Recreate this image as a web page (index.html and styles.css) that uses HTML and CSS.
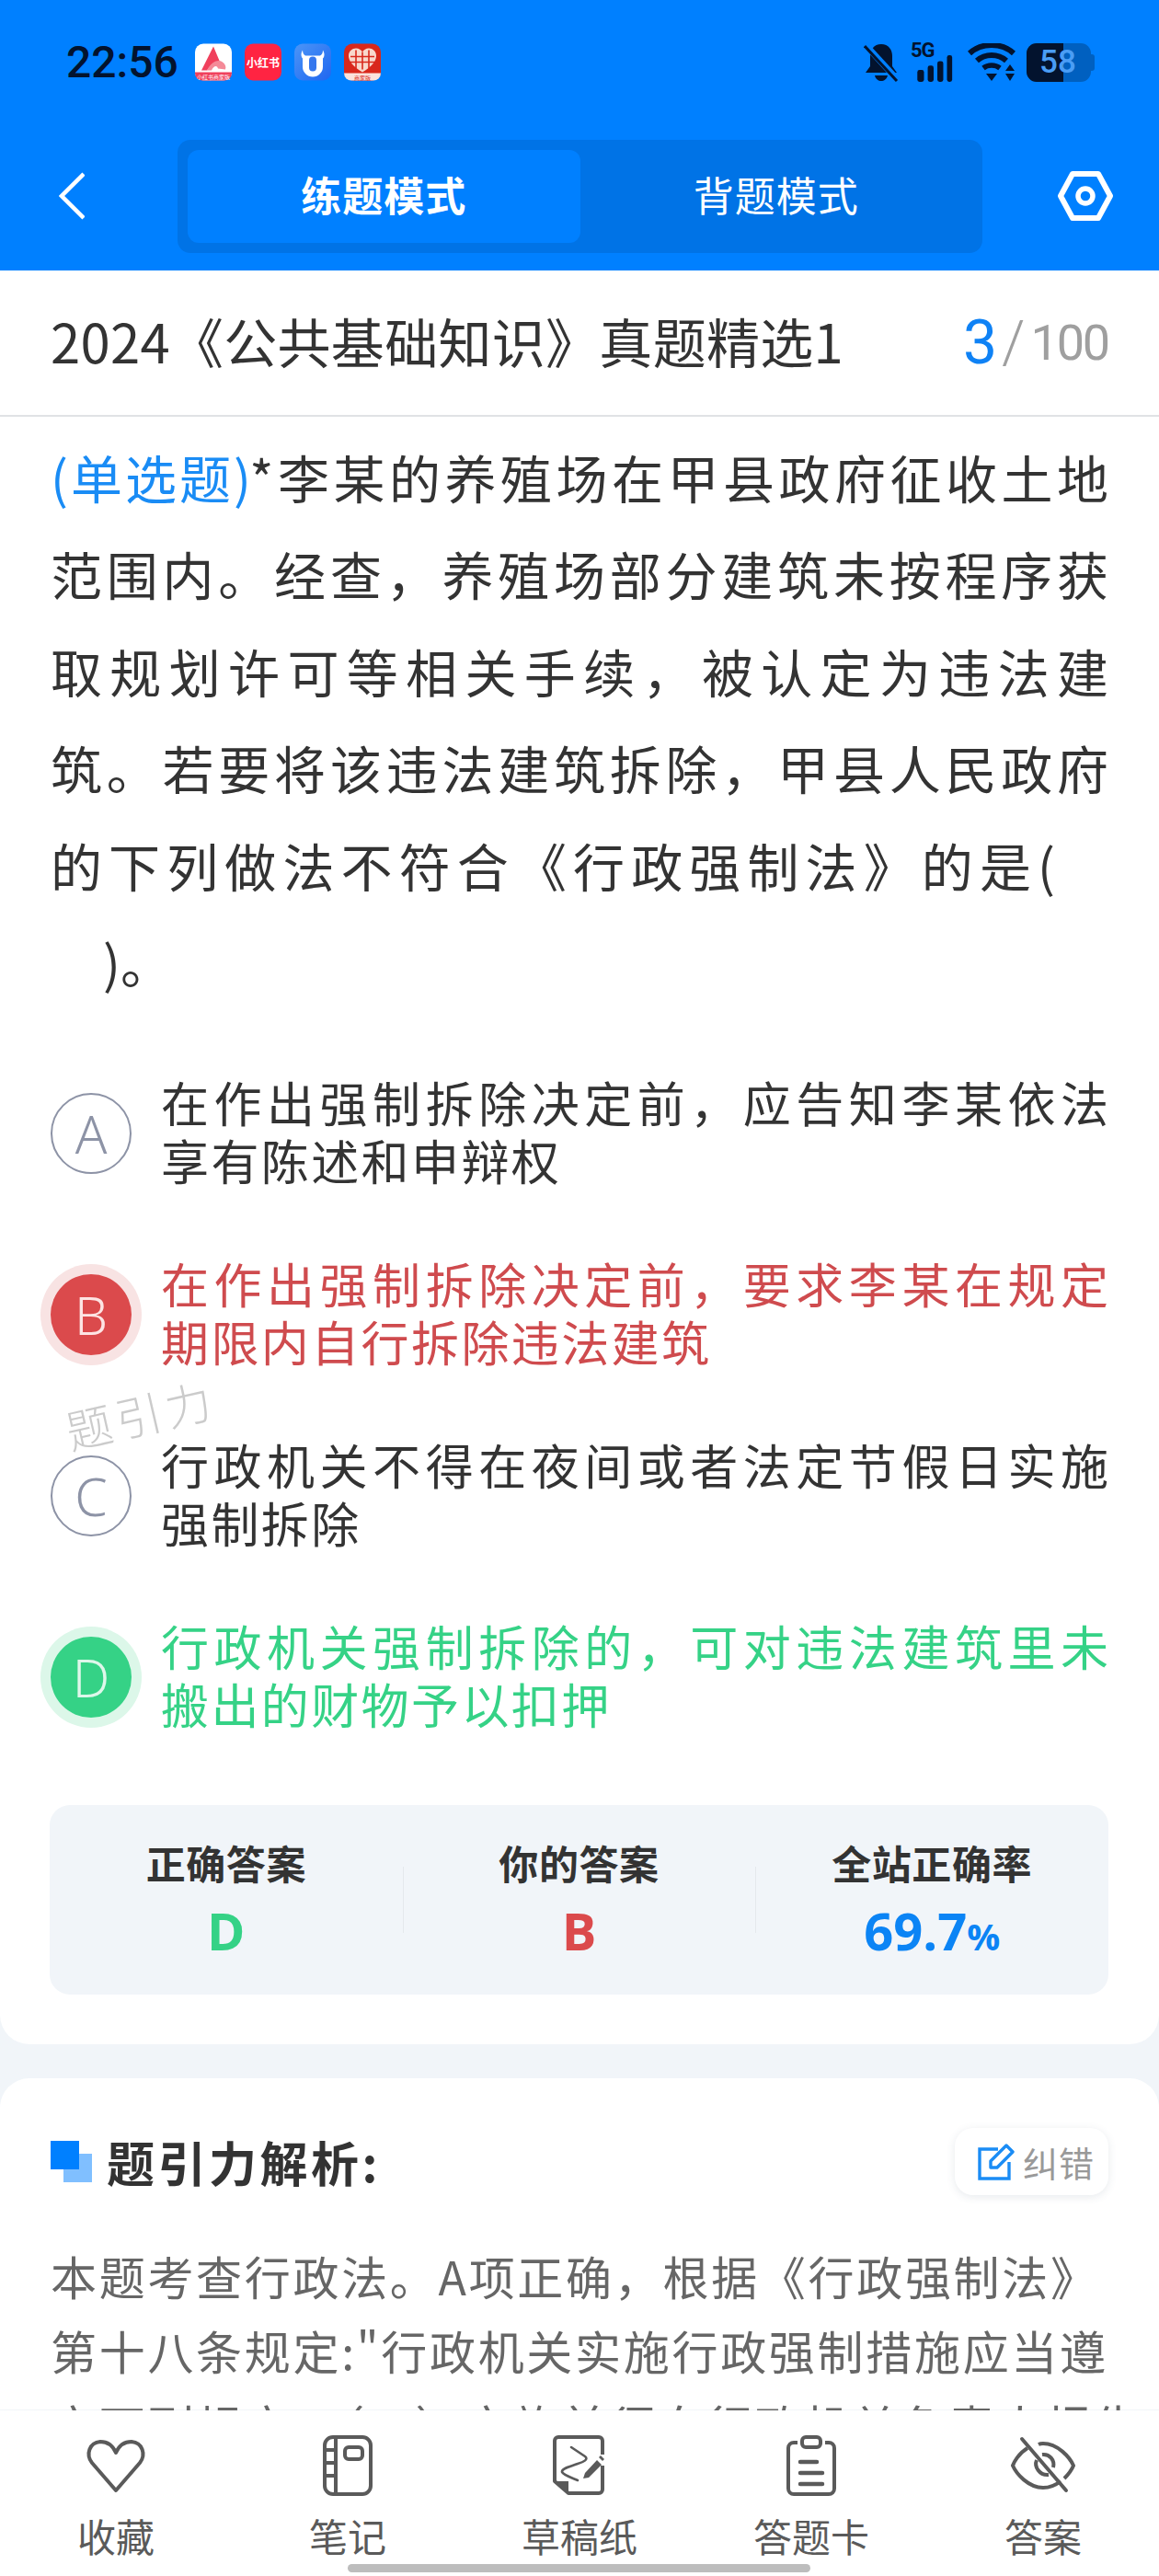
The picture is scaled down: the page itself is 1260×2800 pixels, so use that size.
FILE: index.html
```html
<!DOCTYPE html>
<html lang="zh-CN">
<head>
<meta charset="utf-8">
<title>练题模式</title>
<link rel="stylesheet" href="styles.css">
</head>
<body>
<div class="page">
  <header class="top">
    <div class="status">
      <span class="time">22:56</span>
      <div class="apps">
        <svg class="app" viewBox="0 0 40 40"><rect width="40" height="40" rx="9" fill="#fff"/><path d="M0 31h40v1a8 8 0 0 1-8 8H8a8 8 0 0 1-8-8z" fill="#f0405c"/><path d="M20 3 28 22c-4-3-8-2-11 2l-4 5H7z" fill="#f0405c"/><path d="M13 29c4-8 11-13 17-9 3 2 4 5 3 8l-8-1c-1-4-5-3-7 2z" fill="#f48a98"/><text class="app-tiny" x="20" y="38" text-anchor="middle">小红书商家版</text></svg>
        <svg class="app" viewBox="0 0 40 40"><rect width="40" height="40" rx="9" fill="#ff2442"/><text class="app-xhs" x="20" y="25" text-anchor="middle">小红书</text></svg>
        <svg class="app" viewBox="0 0 40 40"><defs><linearGradient id="bl" x1="0" y1="0" x2="1" y2="1"><stop offset="0" stop-color="#4b95f7"/><stop offset="1" stop-color="#1f66f0"/></linearGradient></defs><rect width="40" height="40" rx="9" fill="url(#bl)"/><path d="M9 7c0 3 1 5 3 6h16c2-1 3-3 3-6 2 3 2 7 0 9v9a11 11 0 0 1-22 0v-9c-2-2-2-6 0-9z" fill="#fff"/><rect x="16" y="14" width="8" height="16" rx="4" fill="#3577ee"/></svg>
        <svg class="app" viewBox="0 0 40 40"><rect width="40" height="40" rx="9" fill="#d9281c"/><path d="M20 31C10 25 5 19 5 13c0-5 4-8 8-8 3 0 6 2 7 4 1-2 4-4 7-4 4 0 8 3 8 8 0 6-5 12-15 18z" fill="#f8d8cc"/><path d="M13 7v20M27 7v20M7 14h26M7 20h26M20 9v19" stroke="#d9281c" stroke-width="1.6" fill="none"/><path d="M0 32h40a8 8 0 0 1-8 8H8a8 8 0 0 1-8-8z" fill="#fbe3dc"/><text class="app-tiny red" x="20" y="39" text-anchor="middle">商家版</text></svg>
      </div>
      <div class="sys">
        <svg class="bell" viewBox="0 0 38 42"><path d="M19 1c8 0 12 6 12 13v11l5 7H2l5-7V14C7 7 11 1 19 1z" fill="#03132e"/><path d="M12 35h14c-1 4-4 6-7 6s-6-2-7-6z" fill="#03132e"/><path d="M3 3l33 36" stroke="#0080ff" stroke-width="7"/><path d="M1 3l35 38" stroke="#03132e" stroke-width="3"/></svg>
        <div class="net">
          <span class="fiveg">5G</span>
          <svg class="bars" viewBox="0 0 50 36"><rect x="3" y="20" width="9" height="16" rx="3"/><rect x="17" y="14" width="8" height="22" rx="3"/><rect x="30" y="8" width="8" height="28" rx="3"/><rect x="43" y="0" width="7" height="36" rx="3"/></svg>
        </div>
        <svg class="wifi" viewBox="0 0 52 42"><path d="M2 11C15-1 37-1 50 11" stroke="#03132e" stroke-width="6" fill="none"/><path d="M10 19c9-8 23-8 32 0" stroke="#03132e" stroke-width="6" fill="none"/><path d="M17 27c5-4 13-4 18 0" stroke="#03132e" stroke-width="5.5" fill="none"/><path d="M20 33h12l-6 8zM41 30l5-7 5 7zM41 33h10l-5 8z" fill="#03132e"/></svg>
        <div class="battery"><div class="battery-fill"></div><span class="battery-num">58</span><span class="battery-tip"></span></div>
      </div>
    </div>
    <nav class="nav">
      <svg class="back" viewBox="0 0 28 52"><path d="M27 2 3 26l24 24" stroke="#fff" stroke-width="4.5" fill="none"/></svg>
      <div class="tabs">
        <div class="tab on">练题模式</div>
        <div class="tab">背题模式</div>
      </div>
      <svg class="gear" viewBox="0 0 60 54"><path d="M16 3h28l13 24-13 24H16L3 27z" stroke="#fff" stroke-width="6" stroke-linejoin="round" fill="none"/><circle cx="30" cy="27" r="8" stroke="#fff" stroke-width="5.5" fill="none"/></svg>
    </nav>
  </header>

  <div class="titlebar">
    <span class="paper">2024《公共基础知识》真题精选1</span>
    <span class="count"><b>3</b><i>/</i>100</span>
  </div>

  <main class="card qcard">
    <p class="question">
      <span class="ql"><span class="kind">(单选题)</span>*李某的养殖场在甲县政府征收土地</span>
      <span class="ql">范围内。经查，养殖场部分建筑未按程序获</span>
      <span class="ql">取规划许可等相关手续，被认定为违法建</span>
      <span class="ql">筑。若要将该违法建筑拆除，甲县人民政府</span>
      <span class="ql short">的下列做法不符合《行政强制法》的是(</span>
      <span class="qe">)。</span>
    </p>
    <ul class="options">
      <li class="opt"><span class="mark">A</span><span class="otext"><span class="ol">在作出强制拆除决定前，应告知李某依法</span><span class="oe">享有陈述和申辩权</span></span></li>
      <li class="opt wrong"><span class="mark">B</span><span class="otext"><span class="ol">在作出强制拆除决定前，要求李某在规定</span><span class="oe">期限内自行拆除违法建筑</span></span></li>
      <li class="opt"><span class="mark">C</span><span class="otext"><span class="ol">行政机关不得在夜间或者法定节假日实施</span><span class="oe">强制拆除</span></span></li>
      <li class="opt right"><span class="mark">D</span><span class="otext"><span class="ol">行政机关强制拆除的，可对违法建筑里未</span><span class="oe">搬出的财物予以扣押</span></span></li>
    </ul>
    <div class="stats">
      <div class="stat"><span class="slabel">正确答案</span><span class="sval green">D</span></div>
      <div class="stat"><span class="slabel">你的答案</span><span class="sval red">B</span></div>
      <div class="stat"><span class="slabel">全站正确率</span><span class="sval blue">69.7<small>%</small></span></div>
    </div>
    <span class="watermark">题引力</span>
  </main>

  <section class="card acard">
    <div class="ahead">
      <h2 class="atitle"><span class="squares"><i></i><i></i></span>题引力解析:</h2>
      <button class="fix"><svg class="fix-ico" viewBox="0 0 40 40"><path d="M22 6H2v32h32V20" stroke="#1a8cf5" stroke-width="3.4" fill="none"/><path d="M14 26v-7L31 2l7 7-17 17z" stroke="#1a8cf5" stroke-width="3.4" fill="none" stroke-linejoin="round"/></svg>纠错</button>
    </div>
    <p class="analysis"><span class="al">本题考查行政法。A项正确，根据《行政强制法》</span><span class="al2">第十八条规定:"行政机关实施行政强制措施应当遵</span><span class="al2">守下列规定：（一）实施前须向行政机关负责人报告</span></p>
  </section>

  <footer class="bottom">
    <div class="item"><svg class="ico" viewBox="0 0 70 66"><path d="M35 60 9 30C2 21 6 8 18 7c8 0 14 5 17 12 3-7 9-12 17-12 12 1 16 14 9 23z" stroke="#5a5a5a" stroke-width="4" stroke-linejoin="round" fill="none"/></svg><span>收藏</span></div>
    <div class="item"><svg class="ico" viewBox="0 0 70 66"><rect x="10" y="2" width="50" height="62" rx="9" stroke="#5a5a5a" stroke-width="4" fill="none"/><path d="M22 2v62M10 16h12M10 30h12M10 44h12" stroke="#5a5a5a" stroke-width="4" fill="none"/><rect x="32" y="13" width="19" height="13" rx="4" stroke="#5a5a5a" stroke-width="4" fill="none"/></svg><span>笔记</span></div>
    <div class="item"><svg class="ico" viewBox="0 0 70 66"><path d="M60 33v26a4 4 0 0 1-4 4H23L8 50V6a4 4 0 0 1 4-4h44a4 4 0 0 1 4 4v15" stroke="#5a5a5a" stroke-width="4" stroke-linejoin="round" fill="none"/><path d="M8 50h15v13z" fill="#5a5a5a"/><path d="M26 13l15 10c4 3-1 6-8 8-8 3-18 5-17 9 1 3 10 6 17 9" stroke="#5a5a5a" stroke-width="2.6" stroke-linecap="round" fill="none"/><path d="M41 41 54 27l5 5-14 14-6 1zM56 24l2-2 4 4-2 2z" fill="#5a5a5a"/></svg><span>草稿纸</span></div>
    <div class="item"><svg class="ico" viewBox="0 0 70 66"><path d="M20 8h-4a6 6 0 0 0-6 6v44a6 6 0 0 0 6 6h38a6 6 0 0 0 6-6V14a6 6 0 0 0-6-6h-4" stroke="#5a5a5a" stroke-width="4" fill="none"/><rect x="25" y="2" width="20" height="11" rx="4" stroke="#5a5a5a" stroke-width="4" fill="none"/><path d="M23 29h18M23 41h24M23 53h24" stroke="#5a5a5a" stroke-width="4.5" stroke-linecap="round" fill="none"/></svg><span>答题卡</span></div>
    <div class="item"><svg class="ico" viewBox="0 0 70 66"><path d="M18 14C8 20 3 30 2 33c4 9 17 24 33 24 7 0 14-3 19-7M30 10c2-1 4-1 5-1 16 0 29 15 33 24-2 5-6 10-10 14" stroke="#5a5a5a" stroke-width="4" stroke-linejoin="round" fill="none"/><path d="M12 4l48 56" stroke="#5a5a5a" stroke-width="4" stroke-linecap="round"/><path d="M28 27c-3 7 3 17 13 16M34 21c8-1 14 6 12 14" stroke="#5a5a5a" stroke-width="4" fill="none"/></svg><span>答案</span></div>
    <span class="home"></span>
  </footer>
</div>
</body>
</html>
```
FILE: styles.css
```css
* { box-sizing: border-box; margin: 0; padding: 0; }
html, body { background: #f1f5f9; }
body { font-family: "Noto Sans CJK SC", "Noto Sans", sans-serif; width: 1260px; height: 2800px; overflow: hidden; }
.page { position: relative; width: 1260px; height: 2800px; overflow: hidden; display: flex; flex-direction: column; }

.top { background: #0080ff; height: 294px; flex: none; }
.status { height: 152px; padding: 47px 74px 0 72px; display: flex; align-items: flex-start; }
.time { font-family: Roboto, sans-serif; font-size: 48px; line-height: 42px; font-weight: 500; color: #03132e; width: 140px; }
.apps { display: flex; gap: 14px; }
.app { width: 40px; height: 41px; display: block; }
.app-tiny { font-size: 6px; fill: #fff; }
.app-tiny.red { fill: #d9281c; }
.app-xhs { font-size: 12px; font-weight: 700; fill: #fff; }
.sys { margin-left: auto; display: flex; align-items: flex-start; }
.bell { width: 38px; height: 42px; display: block; }
.net { width: 52px; margin-left: 13px; position: relative; height: 42px; }
.fiveg { position: absolute; left: 0; top: -4px; font-family: Roboto, sans-serif; font-weight: 700; font-size: 22px; line-height: 24px; color: #03132e; letter-spacing: -1px; }
.bars { position: absolute; left: 0; bottom: 0; width: 50px; height: 29px; fill: #03132e; }
.wifi { width: 52px; height: 42px; margin-left: 10px; display: block; }
.battery { height: 42px; margin-left: 12px; position: relative; background: #0060c0; border-radius: 11px; width: 70px; }
.battery-fill { position: absolute; left: 0; top: 0; bottom: 0; width: 40px; background: #03132e; border-radius: 11px 0 0 11px; }
.battery-num { position: absolute; left: 14px; top: 0; font-family: Roboto, sans-serif; font-weight: 500; font-size: 35px; line-height: 42px; color: #4a9df5; }
.battery-tip { position: absolute; left: 70px; top: 12px; width: 4px; height: 18px; background: #0060c0; border-radius: 0 3px 3px 0; }

.nav { display: flex; align-items: flex-start; position: relative; }
.back { width: 28px; height: 52px; margin: 35px 0 0 64px; display: block; flex: none; }
.tabs { width: 875px; height: 123px; margin-left: 101px; flex: none; background: #0073e6; border-radius: 14px; padding: 11px; display: flex; }
.tab { flex: 1; height: 101px; border-radius: 12px; color: #fff; font-size: 44px; line-height: 96px; text-align: center; letter-spacing: 1px; }
.tab.on { background: #0080ff; font-weight: 700; }
.gear { width: 60px; height: 54px; margin: 34px 0 0 82px; display: block; flex: none; }

.titlebar { height: 159px; flex: none; background: #fff; border-bottom: 2px solid #e0e2e5; padding: 0 55px; display: flex; align-items: center; justify-content: space-between; }
.paper { font-size: 58px; line-height: 90px; color: #333; letter-spacing: .3px; margin-bottom: 6px; }
.count { font-family: Roboto, sans-serif; font-size: 54px; line-height: 70px; color: #9f9f9f; display: flex; align-items: center; letter-spacing: -2.2px; }
.count b { font-weight: 400; font-size: 66px; color: #0f82f5; margin-right: 5px; letter-spacing: 0; }
.count i { font-style: normal; font-weight: 300; font-size: 64px; margin-right: 6px; letter-spacing: 0; }

.card { background: #fff; }
.qcard { position: relative; height: 1769px; flex: none; border-radius: 0 0 32px 32px; padding: 12px 55px 0; }
.question { font-size: 56px; line-height: 105.4px; color: #333; }
.ql { display: block; text-align: justify; text-align-last: justify; height: 105.4px; white-space: nowrap; }
.ql.short { width: 1092px; }
.qe { display: block; padding-left: 57px; height: 106px; }
.kind { color: #1a8cf5; letter-spacing: -1.5px; }
.options { list-style: none; margin-top: 71px; display: flex; flex-direction: column; gap: 71px; }
.opt { display: flex; height: 126px; align-items: center; position: relative; }
.mark { width: 88px; height: 88px; flex: none; border-radius: 50%; border: 2px solid #8d93a6; color: #8d93a6; font-size: 57px; line-height: 84px; text-align: center; font-family: "Noto Sans", sans-serif; font-weight: 300; margin-right: 32px; }
.wrong .mark { background: #db4a4c; border: 0; color: #fde4e4; line-height: 88px; box-shadow: 0 0 0 11px #f8e3e3; }
.right .mark { background: #35d286; border: 0; color: #def7ea; line-height: 88px; box-shadow: 0 0 0 11px #dcf7e9; }
.otext { flex: 1; font-size: 52px; line-height: 63px; color: #333; display: block; margin-top: -6px; }
.ol { display: block; text-align: justify; text-align-last: justify; white-space: nowrap; }
.oe { display: block; letter-spacing: 2.4px; white-space: nowrap; }
.wrong .otext { color: #cf4b4e; }
.right .otext { color: #35d286; }
.stats { position: absolute; left: 54px; right: 55px; top: 1509px; height: 206px; background: #f1f5f9; border-radius: 22px; display: flex; padding-top: 37px; }
.stat { flex: 1; display: flex; flex-direction: column; align-items: center; position: relative; }
.stat + .stat::before { content: ""; position: absolute; left: 0; top: 30px; height: 72px; width: 1px; background: #e4e8ec; }
.slabel { font-size: 43px; line-height: 50px; font-weight: 700; color: #333; letter-spacing: .6px; }
.sval { font-family: "Open Sans", sans-serif; font-size: 56px; line-height: 70px; font-weight: 700; margin-top: 14px; }
.sval small { font-size: 40px; }
.green { color: #35d286; }
.red { color: #db4a4c; }
.blue { color: #0b84f5; }
.watermark { position: absolute; left: 70px; top: 1053px; font-size: 50px; line-height: 60px; color: #cbcbcb; transform: rotate(-13deg); letter-spacing: 5px; font-weight: 300; }

.acard { flex: none; margin-top: 37px; border-radius: 32px 32px 0 0; padding: 54px 55px 0; height: 360px; }
.ahead { display: flex; justify-content: space-between; align-items: center; height: 73px; }
.atitle { font-size: 52px; line-height: 73px; font-weight: 700; color: #333; display: flex; align-items: center; letter-spacing: 3.5px; }
.squares { position: relative; display: block; width: 46px; height: 46px; margin-right: 15px; flex: none; }
.squares i { position: absolute; width: 31px; height: 31px; display: block; }
.squares i:first-child { left: 14px; top: 14px; background: #80bfff; }
.squares i:last-child { left: 0; top: 0; background: #0080ff; }
.fix { width: 167px; height: 73px; border: 0; border-radius: 20px; background: #fff; box-shadow: 0 2px 10px rgba(60, 80, 110, .12); display: flex; align-items: center; padding-left: 25px; font-family: inherit; font-size: 38px; color: #999; gap: 9px; letter-spacing: 1px; }
.fix-ico { width: 40px; height: 40px; flex: none; }
.analysis { margin-top: 47px; font-size: 50px; line-height: 81px; color: #666; white-space: nowrap; }
.al { display: block; width: 1137px; text-align: justify; text-align-last: justify; }
.al2 { display: block; letter-spacing: 2.7px; }

.bottom { position: absolute; left: 0; right: 0; top: 2620px; height: 180px; background: #fff; display: flex; }
.item { flex: 1; display: flex; flex-direction: column; align-items: center; padding-top: 27px; color: #5a5a5a; font-size: 42px; }
.ico { width: 70px; height: 66px; display: block; }
.item span { line-height: 50px; margin-top: 18px; }
.home { position: absolute; left: 378px; width: 503px; top: 167px; height: 9px; background: #bdbdbd; border-radius: 5px; }
```
